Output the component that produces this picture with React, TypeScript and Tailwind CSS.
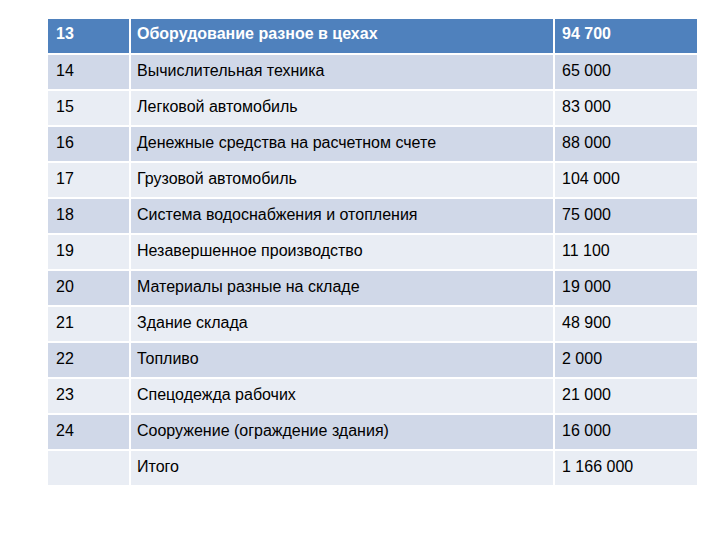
const rows: [string, string, string][] = [
  ["14", "Вычислительная техника", "65 000"],
  ["15", "Легковой автомобиль", "83 000"],
  ["16", "Денежные средства на расчетном счете", "88 000"],
  ["17", "Грузовой автомобиль", "104 000"],
  ["18", "Система водоснабжения и отопления", "75 000"],
  ["19", "Незавершенное производство", "11 100"],
  ["20", "Материалы разные на складе", "19 000"],
  ["21", "Здание склада", "48 900"],
  ["22", "Топливо", "2 000"],
  ["23", "Спецодежда рабочих", "21 000"],
  ["24", "Сооружение (ограждение здания)", "16 000"],
  ["", "Итого", "1 166 000"],
];

export default function App() {
  return (
    <div className="w-[720px] h-[540px] bg-white pl-[48px] pt-[19px] font-['Liberation_Sans',sans-serif] text-[16px] leading-[20px]">
      <div className="grid grid-cols-[81px_422px_142px] gap-[2px] w-[649px] bg-white">
        <div className="h-[34px] bg-[#4f81bd] pl-[8px] pt-[5px] font-bold text-white">13</div>
        <div className="h-[34px] bg-[#4f81bd] pl-[6px] pt-[5px] font-bold text-white">Оборудование разное в цехах</div>
        <div className="h-[34px] bg-[#4f81bd] pl-[7px] pt-[5px] font-bold text-white">94 700</div>
        {rows.map(([n, name, sum], i) => {
          const bg = i % 2 === 0 ? "bg-[#d0d8e8]" : "bg-[#e9edf4]";
          return [
            <div key={`a${i}`} className={`h-[34px] ${bg} pl-[8px] pt-[6px] text-black`}>{n}</div>,
            <div key={`b${i}`} className={`h-[34px] ${bg} pl-[6px] pt-[6px] text-black`}>{name}</div>,
            <div key={`c${i}`} className={`h-[34px] ${bg} pl-[7px] pt-[6px] text-black`}>{sum}</div>,
          ];
        })}
      </div>
    </div>
  );
}
